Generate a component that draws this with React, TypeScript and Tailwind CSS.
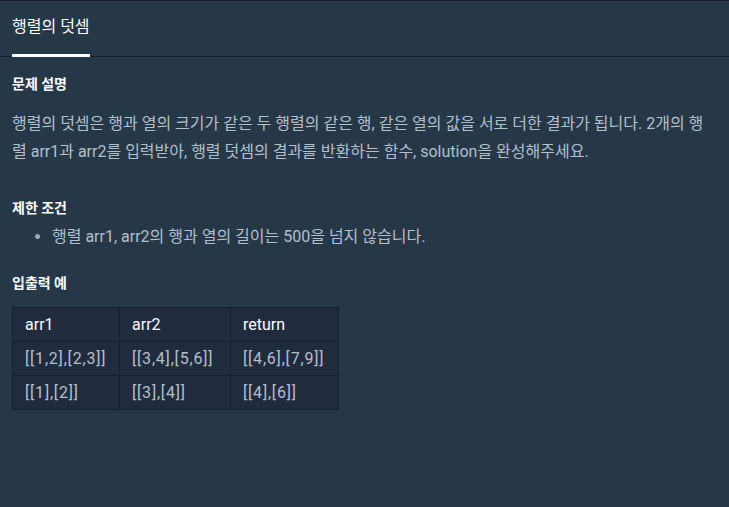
const rows = [
  ["arr1", "arr2", "return"],
  ["[[1,2],[2,3]]", "[[3,4],[5,6]]", "[[4,6],[7,9]]"],
  ["[[1],[2]]", "[[3],[4]]", "[[4],[6]]"],
]

export default function App() {
  return (
    <div
      className="min-h-[507px] w-full bg-[#263747] border-t border-[#172030]"
      style={{ fontFamily: 'Roboto, "Noto Sans CJK KR", sans-serif' }}
    >
      {/* Tab header */}
      <div className="flex border-b border-[#172030] px-3">
        <div className="-mb-[1px] border-b-[3px] border-white pt-[13px] pb-[14px] text-[16px] leading-[26px] text-white">
          행렬의 덧셈
        </div>
      </div>

      <div className="px-3 pt-[15px]">
        <h5 className="text-[14px] font-bold leading-6 text-white">문제 설명</h5>
        <p className="mt-[14px] break-all text-[16px] leading-[28px] text-[#b2c0cc]">
          행렬의 덧셈은 행과 열의 크기가 같은 두 행렬의 같은 행, 같은 열의 값을 서로 더한 결과가 됩니다. 2개의 행렬 arr1과 arr2를 입력받아, 행렬 덧셈의 결과를 반환하는 함수, solution을 완성해주세요.
        </p>

        <h5 className="mt-[30px] text-[14px] font-bold leading-6 text-white">제한 조건</h5>
        <ul className="mt-[3px] list-disc pl-10 text-[16px] leading-[28px] text-[#b2c0cc] marker:text-[#98a8b9]">
          <li>행렬 arr1, arr2의 행과 열의 길이는 500을 넘지 않습니다.</li>
        </ul>

        <h5 className="mt-[20px] text-[14px] font-bold leading-6 text-white">입출력 예</h5>
        <table className="mt-[12px] border-collapse bg-[#202b3d] text-[16px]">
          <tbody>
            {rows.map((r, i) => (
              <tr key={i} className="h-[34px]">
                {r.map((c, j) => (
                  <td
                    key={j}
                    className={
                      "border border-[#172030] px-3 " +
                      (i === 0 ? "text-white" : "text-[#b2c0cc] tracking-[0.8px]") +
                      (j === 0 ? " w-[107px]" : j === 1 ? " w-[111px]" : " w-[108px]")
                    }
                  >
                    {c}
                  </td>
                ))}
              </tr>
            ))}
          </tbody>
        </table>
      </div>
    </div>
  )
}
